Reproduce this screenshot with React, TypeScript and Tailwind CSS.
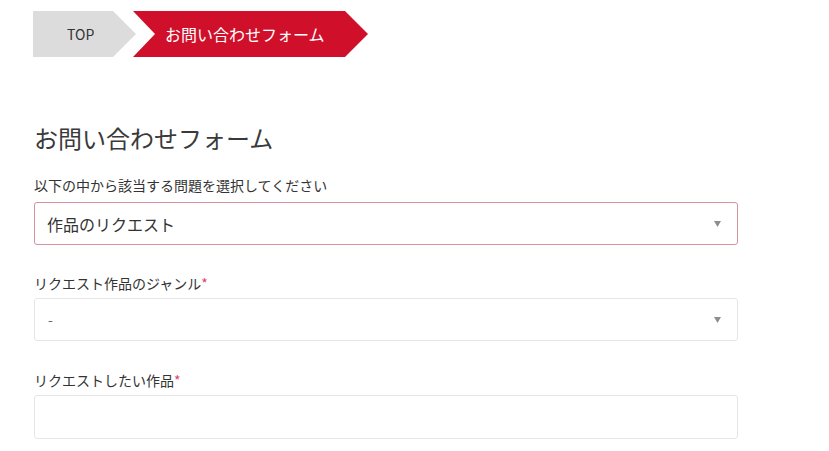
import React from "react";

const font = { fontFamily: '"Noto Sans CJK JP", "Noto Sans", sans-serif' };

function Arrow() {
  return (
    <svg width="7" height="6" viewBox="0 0 7 6" className="shrink-0">
      <path d="M0 0 L7 0 L3.5 6 Z" fill="#8f8f8f" />
    </svg>
  );
}

export default function App() {
  return (
    <div className="w-[829px] h-[451px] bg-white overflow-hidden text-[#333]" style={font}>
      <div className="pl-[33px] pt-[11px] flex">
        <div
          className="w-[103px] h-[46px] bg-[#dcdcdc] flex items-center pl-[34px] text-[14px] text-[#333]"
          style={{ clipPath: "polygon(0 0, 80px 0, 103px 50%, 80px 100%, 0 100%)" }}
        >
          TOP
        </div>
        <div
          className="ml-[-3px] w-[235px] h-[46px] bg-[#d0102b] flex items-center pl-[32px] text-[16px] text-white"
          style={{ clipPath: "polygon(0 0, 212px 0, 235px 50%, 212px 100%, 0 100%, 22px 50%)" }}
        >
          お問い合わせフォーム
        </div>
      </div>

      <div className="pl-[34px] w-[738px]">
        <h1 className="mt-[63px] text-[24px] leading-[36px] font-normal text-[#3a3a3a]">お問い合わせフォーム</h1>

        <div className="mt-[19px] text-[14px] leading-[20px]">以下の中から該当する問題を選択してください</div>
        <div className="mt-[7px] h-[43px] border border-[#d4939f] rounded-[3px] flex items-center justify-between pl-[12px] pr-[16px]">
          <span className="text-[16px] text-[#333]">作品のリクエスト</span>
          <Arrow />
        </div>

        <div className="mt-[28px] text-[14px] leading-[20px]">
          リクエスト作品のジャンル<span className="text-[#e0485e]">*</span>
        </div>
        <div className="mt-[5px] h-[43px] border border-[#e6e6e6] rounded-[3px] flex items-center justify-between pl-[13px] pr-[16px]">
          <span className="text-[14px] text-[#666]">-</span>
          <Arrow />
        </div>

        <div className="mt-[29px] text-[14px] leading-[20px]">
          リクエストしたい作品<span className="text-[#e0485e]">*</span>
        </div>
        <div className="mt-[5px] h-[44px] border border-[#e6e6e6] rounded-[3px]"></div>
      </div>
    </div>
  );
}
